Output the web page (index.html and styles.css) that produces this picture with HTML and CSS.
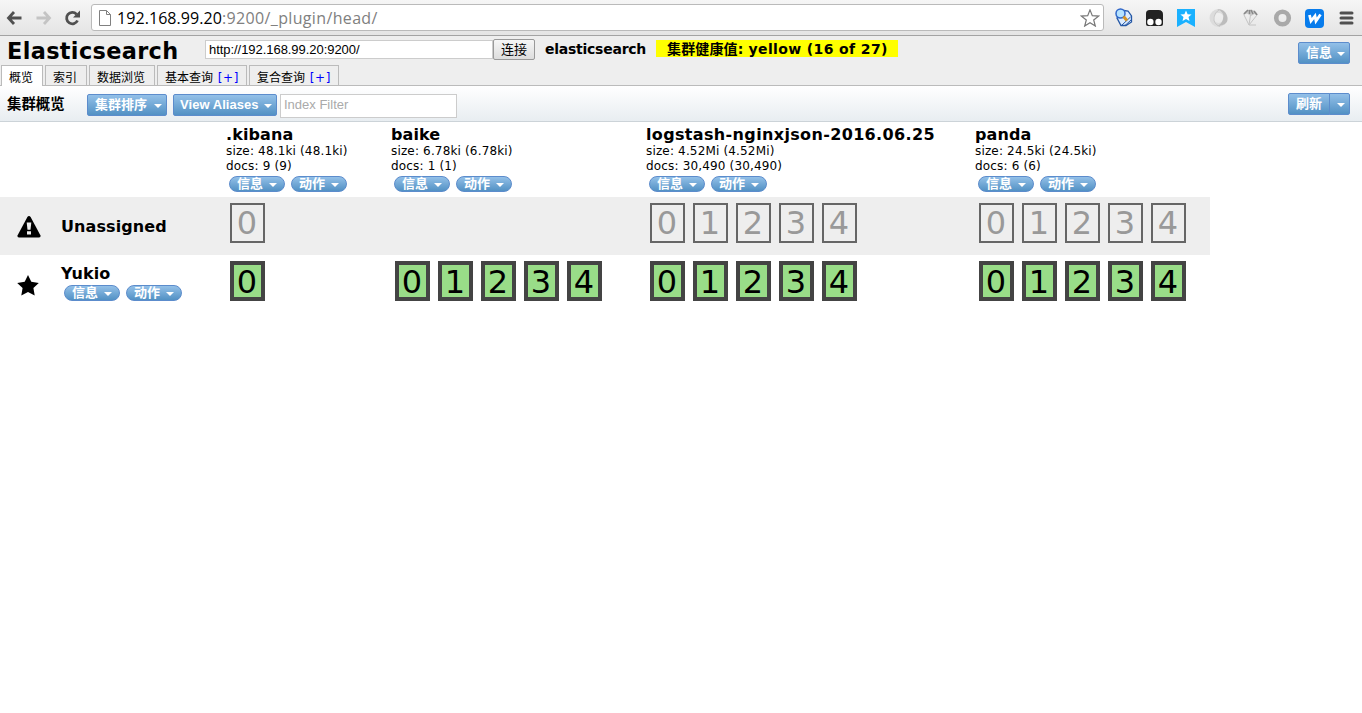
FILE: index.html
```html
<!DOCTYPE html>
<html lang="zh-CN">
<head>
<meta charset="utf-8">
<title>Elasticsearch</title>
<link rel="stylesheet" href="styles.css">
</head>
<body>
<div class="browser">
  <svg class="nav" width="80" height="24" viewBox="0 0 80 24" fill="none" stroke-width="2.800">
    <path d="M8.500 12H21.500M14 6L8.500 12L14 18" stroke="#505050"/>
    <path d="M36.500 12H49M44 6L49.500 12L44 18" stroke="#c4c4c4"/>
    <path d="M76.500 8.200A5.700 5.700 0 1 0 77.500 14.500" stroke="#505050"/><path d="M80 4.500V11.500H73Z" fill="#505050"/>
  </svg>
  <div class="address">
    <svg width="12" height="16" viewBox="0 0 12 16" fill="#fff" stroke="#808080"><path d="M.5.5H7.500L11.500 4.500V15.500H.5ZM7.500.5V4.500H11.500"/></svg>
    <span class="url"><b>192.168.99.20</b>:9200/_plugin/head/</span>
    <svg class="bookmark" width="20" height="18" viewBox="0 0 20 18" fill="#fff" stroke="#777" stroke-width="1.200"><path d="M10 .9L12.300 6.700L18.500 7.100L13.700 11L15.300 17L10 13.700L4.700 17L6.300 11L1.500 7.100L7.700 6.700Z"/></svg>
  </div>
  <svg class="extensions" width="242" height="24" viewBox="0 0 242 24">
    <g><path d="M5 13L12 5.500L16 6L19.500 11V17L14 20.500H9Z" fill="#dcecff" stroke="#2457a5" stroke-width="1.300"/><path d="M10 20L18.500 12M13 20.500L19 15" stroke="#2457a5"/><circle cx="8.500" cy="8.500" r="4.500" fill="#b5e2ff" stroke="#2e66c9" stroke-width="1.500"/><path d="M11.500 11.500L15 15.500" stroke="#d59324" stroke-width="3"/></g>
    <g><path d="M37.500 5H46.500Q51 5 51 9.500V19Q51 21 49 21H36Q34 21 34 19V8.500Q34 5 37.500 5Z" fill="#222"/><circle cx="38.400" cy="17" r="3.200" fill="#fff"/><circle cx="46.500" cy="17" r="3.200" fill="#fff"/></g>
    <g><path d="M65 4H83V22L74 17L65 22Z" fill="#1ab1ff"/><path d="M74 5.500L75.600 9.200L79.600 9.500L76.500 12.100L77.500 16L74 13.900L70.500 16L71.500 12.100L68.400 9.500L72.400 9.200Z" fill="#fff"/></g>
    <g><circle cx="106.500" cy="13" r="7" fill="none" stroke="#dcdcdc" stroke-width="4"/><path d="M105 4Q113 7 111 14Q110 19 105 21Q118 20 115 11Q113 4 105 4Z" fill="#bcbcbc"/><path d="M108 21.500Q101 19 102 12Q103 7 107 5" fill="none" stroke="#c8c8c8"/></g>
    <g fill="none"><path d="M131 10Q132 5 138 4.500Q144 5 146 10L142.500 9L139 11L135 8.500Z" fill="#c8c8c8"/><path d="M132 9L136 5M137.500 9V5M141 9L139 5M145 10L142 6" stroke="#888" stroke-width="1.500"/><path d="M132 10L137 20L138.500 10M145 10L137 20H144" stroke="#c4c4c4"/></g>
    <circle cx="170.500" cy="13" r="6.300" fill="none" stroke="#a9a9a9" stroke-width="4.600"/>
    <g><rect x="193" y="4" width="19" height="19" rx="4" fill="#087cec"/><path d="M197.500 10L199 16L203 11L204 16L208.500 9.500" fill="none" stroke="#fff" stroke-width="2.800"/></g>
    <path d="M229 8H240M229 13H240M229 18H240" stroke="#505050" stroke-width="3" stroke-linecap="round"/>
  </svg>
</div>
<header class="header">
  <div class="headline">
    <h1>Elasticsearch</h1>
    <div class="connect"><span class="endpoint">http://192.168.99.20:9200/</span><span class="connect-button">连接</span></div>
    <span class="cluster">elasticsearch</span>
    <span class="health">集群健康值: <span>yellow (16 of 27)</span></span>
    <span class="button info">信息<i></i></span>
  </div>
  <nav class="tabs">
    <span class="tab active">概览</span><span class="tab t2">索引</span><span class="tab t3">数据浏览</span><span class="tab t4">基本查询 <a>[+]</a></span><span class="tab t5">复合查询 <a>[+]</a></span>
  </nav>
</header>
<div class="toolbar">
  <span class="title">集群概览</span>
  <span class="button sort">集群排序<i></i></span>
  <span class="button aliases">View Aliases<i></i></span>
  <span class="filter">Index Filter</span>
  <span class="refresh"><span class="button">刷新</span><span class="button more"><i></i></span></span>
</div>
<main class="grid">
  <div class="row indices">
    <div></div><div></div>
    <div class="index"><h2>.kibana</h2><p>size: 48.1ki (48.1ki)</p><p>docs: 9 (9)</p><div class="actions"><span class="pill">信息<i></i></span><span class="pill">动作<i></i></span></div></div>
    <div class="index"><h2>baike</h2><p>size: 6.78ki (6.78ki)</p><p>docs: 1 (1)</p><div class="actions"><span class="pill">信息<i></i></span><span class="pill">动作<i></i></span></div></div>
    <div class="index"><h2 class="long">logstash-nginxjson-2016.06.25</h2><p>size: 4.52Mi (4.52Mi)</p><p>docs: 30,490 (30,490)</p><div class="actions"><span class="pill">信息<i></i></span><span class="pill">动作<i></i></span></div></div>
    <div class="index"><h2>panda</h2><p>size: 24.5ki (24.5ki)</p><p>docs: 6 (6)</p><div class="actions"><span class="pill">信息<i></i></span><span class="pill">动作<i></i></span></div></div>
  </div>
  <div class="row unassigned">
    <svg class="mark" width="24" height="22" viewBox="0 0 24 22"><path d="M12 0Q13 0 13.600 1L23.500 19.500Q24 21.500 22 21.500H2Q0 21.500 .5 19.500L10.400 1Q11 0 12 0Z"/><path d="M9.700 6.500H14.300L13.500 13.800H10.500ZM10 15.200H14V18.500H10Z" fill="#eee"/></svg>
    <div class="node"><h3>Unassigned</h3></div>
    <div class="shards"><span>0</span></div><div></div>
    <div class="shards"><span>0</span><span>1</span><span>2</span><span>3</span><span>4</span></div>
    <div class="shards"><span>0</span><span>1</span><span>2</span><span>3</span><span>4</span></div>
  </div>
  <div class="row assigned">
    <svg class="mark" width="22" height="21" viewBox="0 0 22 21"><path d="M11 0L14.300 6.800L21.800 7.900L16.400 13.100L17.700 20.600L11 17L4.300 20.600L5.600 13.100L.2 7.900L7.700 6.800Z"/></svg>
    <div class="node"><h3>Yukio</h3><div class="actions"><span class="pill">信息<i></i></span><span class="pill">动作<i></i></span></div></div>
    <div class="shards"><span>0</span></div>
    <div class="shards"><span>0</span><span>1</span><span>2</span><span>3</span><span>4</span></div>
    <div class="shards"><span>0</span><span>1</span><span>2</span><span>3</span><span>4</span></div>
    <div class="shards"><span>0</span><span>1</span><span>2</span><span>3</span><span>4</span></div>
  </div>
</main>
</body>
</html>
```
FILE: styles.css
```css
* { box-sizing: border-box; }
body { margin: 0; background: #fff; color: #000; font: 12px/15px "DejaVu Sans", "Noto Sans CJK SC", sans-serif; white-space: nowrap; overflow: hidden; }
h1, h2, h3, p { margin: 0; }
svg { display: block; flex: none; }

.browser { height: 36px; display: flex; align-items: flex-start; padding-top: 4px; background: linear-gradient(#f6f6f6, #e4e4e4); border-bottom: 1px solid #a3a3a3; }
.nav { margin: 2px 0 0; }
.address { width: 1013px; height: 27px; margin-left: 11px; padding: 0 3px 0 7px; display: flex; align-items: center; background: #fff; border: 1px solid #bababa; border-radius: 3px; }
.url { margin-left: 6px; font: 16px/24px "Open Sans", sans-serif; color: #808080; letter-spacing: .35px; }
.url b { font-weight: 400; color: #000; letter-spacing: .07px; }
.bookmark { margin-left: auto; }
.extensions { margin: 1px 0 0 8px; }

.header { height: 50px; background: #eee; border-bottom: 1px solid #bbb; }
.headline { height: 29px; display: flex; align-items: flex-start; padding: 0 12px 0 7px; }
h1 { width: 198px; font-size: 22.400px; line-height: 31px; letter-spacing: .35px; }
.connect { display: flex; width: 330px; padding-top: 3px; font-family: "Liberation Sans", "Noto Sans CJK SC", sans-serif; }
.endpoint { width: 288px; height: 19px; margin-top: 1px; padding-left: 3px; font-size: 13px; letter-spacing: -.05px; line-height: 17px; background: #fff; border: 1px solid #ccc; }
.connect-button { width: 42px; height: 21px; line-height: 19px; text-align: center; font-size: 13px; border: 1px solid #999; border-radius: 2px; background: linear-gradient(#f6f6f6, #ddd); }
.cluster { width: 111px; margin-left: 10px; font-weight: 700; font-size: 14px; line-height: 26px; letter-spacing: -.25px; }
.health { width: 242px; height: 17px; margin-top: 4px; padding-left: 11px; background: #ff0; font-weight: 700; font-size: 14px; line-height: 18px; letter-spacing: .15px; }
.health span { letter-spacing: .38px; }
.tabs { height: 21px; display: flex; gap: 2px; padding-left: 1px; }
.tab { height: 20px; padding-left: 7px; line-height: 25px; border: 1px solid #bbb; border-bottom: 0; }
.active { width: 42px; height: 21px; background: #fff; }
.t2 { width: 42px; }
.t3 { width: 66px; }
.t4, .t5 { width: 90px; }
.tab a { color: #00f; letter-spacing: .6px; margin-left: 1px; }

.button, .pill { display: inline-flex; align-items: center; color: #fff; font: 700 13px/20px "Liberation Sans", "Noto Sans CJK SC", sans-serif; border: 1px solid #5c8ccc; background: linear-gradient(#93c0e8, #5291c4); }
.button { height: 22px; padding: 0 4px 0 7px; border-radius: 2px; }
.button i, .pill i { margin-left: auto; margin-top: 2px; border: 4px solid transparent; border-top-color: #fff; border-bottom: 0; }
.info { width: 52px; margin: 6px 0 0 auto; }

.toolbar { height: 36px; display: flex; align-items: center; padding: 2px 12px 0 7px; background: linear-gradient(#fff, #e8edf1); border-bottom: 1px solid #ccd3d8; }
.title { width: 80px; font-size: 14.400px; font-weight: 700; }
.sort { width: 80px; margin-right: 6px; }
.aliases { width: 104px; padding-left: 6px; letter-spacing: .05px; }
.filter { width: 177px; height: 24px; margin: 3px 0 0 3px; padding-left: 3px; border: 1px solid #ccc; background: #fff; color: #aaa; font: 13px/19px "Liberation Sans", sans-serif; }
.refresh { display: flex; margin: 0 0 1px auto; }
.refresh .button { width: 42px; border-radius: 2px 0 0 2px; }
.refresh .more { width: 21px; margin-left: -1px; padding-right: 5px; border-radius: 0 2px 2px 0; }

.grid { width: 1210px; }
.row { display: grid; grid-template-columns: 57px 165px 165px 255px 329px 239px; }
.row > div { padding-left: 4px; }
.indices { height: 75px; }
.index h2 { padding-top: 4px; font-size: 16px; line-height: 18px; letter-spacing: .1px; }
.index .long { letter-spacing: .35px; }
.index p { line-height: 15px; letter-spacing: .16px; }
.actions { display: flex; gap: 6px; padding: 3px 0 0 3px; }
.index .actions { padding-top: 2px; }
.pill { width: 56px; height: 16px; padding: 0 7px; border-radius: 8px; line-height: 14px; }
.unassigned { height: 58px; background: #eee; }
.assigned { height: 58px; }
.mark { margin: 19px 0 0 17px; }
.assigned .mark { margin: 20px 0 0 16.500px; }
.node h3 { font-size: 16px; line-height: 59px; letter-spacing: .1px; }
.assigned .node { padding-top: 10px; }
.assigned h3 { line-height: 18px; }
.assigned .actions { padding-top: 2px; }
.row > .shards { display: flex; gap: 8px; padding: 6px 0 0 8px; }
.shards span { width: 35px; height: 40px; border: 2px solid #666; color: #999; font-size: 32px; line-height: 37px; text-align: center; text-indent: -1px; }
.assigned .shards span { border: 4px solid #444; background: #9d8; color: #000; line-height: 35px; }
```
